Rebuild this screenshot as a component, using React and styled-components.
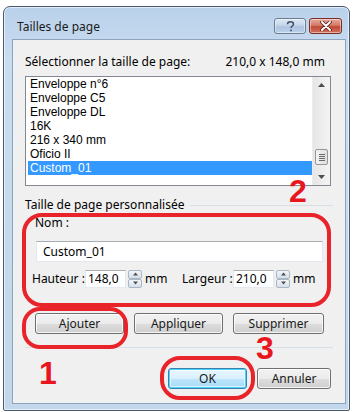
import React from "react";
import styled, { createGlobalStyle } from "styled-components";

const GlobalStyle = createGlobalStyle`
  html, body {
    margin: 0;
    padding: 0;
    background: #ffffff;
  }
  body {
    font-family: "Noto Sans", "Open Sans", sans-serif;
    font-size: 12px;
    color: #000;
  }
`;

const Window = styled.div`
  margin: 6px 0 0 3px;
  width: 345px;
  height: 403px;
  border: 1px solid #4a5a6e;
  border-radius: 7px 7px 2px 2px;
  background: linear-gradient(180deg, #b9d1ea 0%, #c9dcf1 12%, #c2d6ec 100%);
  box-shadow: inset 0 0 0 1px rgba(255, 255, 255, 0.6);
  display: flex;
  flex-direction: column;
`;

const TitleBar = styled.div`
  height: 32px;
  display: flex;
  align-items: flex-start;
  padding: 0 7px 0 13px;
`;

const Title = styled.div`
  font-size: 12px;
  line-height: 16px;
  margin-top: 12px;
  flex: 1;
  color: #1a1a1a;
`;

const CaptionButton = styled.div`
  margin-top: 11px;
  box-sizing: border-box;
  width: ${(p) => p.$w}px;
  height: 16px;
  border: 1px solid ${(p) => (p.$close ? "#7a2d25" : "#6b7d93")};
  border-radius: 3px;
  margin-left: ${(p) => (p.$close ? 3 : 0)}px;
  background: ${(p) =>
    p.$close
      ? "linear-gradient(180deg, #e9a99c 0%, #d47a68 45%, #c14a36 55%, #d2735f 100%)"
      : "linear-gradient(180deg, #dfe9f5 0%, #c4d5ea 45%, #aec4df 55%, #bdd2ea 100%)"};
  display: flex;
  align-items: center;
  justify-content: center;
  box-shadow: inset 0 0 0 1px rgba(255, 255, 255, 0.45);
`;

const Client = styled.div`
  flex: 1;
  margin: 0 3px 6px 8px;
  background: #f0f0f0;
  border: 1px solid #8fa4bd;
  padding: 14px 14px 0 12px;
  position: relative;
`;

const HeadRow = styled.div`
  display: flex;
  justify-content: space-between;
  line-height: 16px;
  padding: 0 6px 0 0;
  margin-bottom: 6px;
`;

const ListBox = styled.div`
  height: 108px;
  border: 1px solid #828790;
  background: #fff;
  display: flex;
  overflow: hidden;
`;

const Items = styled.div`
  flex: 1;
  padding-left: 2px;
  font-family: "Liberation Sans", Arial, sans-serif;
  font-size: 12px;
`;

const Item = styled.div`
  height: 14px;
  line-height: 14px;
  padding-left: 2px;
  background: ${(p) => (p.$selected ? "#3399ff" : "transparent")};
  color: ${(p) => (p.$selected ? "#fff" : "#000")};
`;

const ScrollBar = styled.div`
  width: 17px;
  background: linear-gradient(90deg, #e6e6e6, #f4f4f4);
  border-left: 1px solid #ececec;
  display: flex;
  flex-direction: column;
  align-items: center;
`;

const Arrow = styled.div`
  height: 16px;
  display: flex;
  align-items: center;
  justify-content: center;
`;

const Track = styled.div`
  flex: 1;
  width: 100%;
  display: flex;
  flex-direction: column;
  justify-content: flex-end;
  align-items: center;
  padding-bottom: 4px;
`;

const Thumb = styled.div`
  width: 13px;
  height: 16px;
  border: 1px solid #979797;
  border-radius: 2px;
  background: linear-gradient(90deg, #f3f3f3, #dedede);
  display: flex;
  flex-direction: column;
  align-items: center;
  justify-content: center;
  gap: 1px;
  box-sizing: border-box;
`;

const Grip = styled.div`
  width: 6px;
  height: 1px;
  background: #6a6a6a;
`;

const GroupHeader = styled.div`
  display: flex;
  align-items: center;
  gap: 6px;
  margin-top: 11px;
  line-height: 16px;
  &::after {
    content: "";
    flex: 1;
    height: 1px;
    background: #d5dfe5;
    margin-right: -2px;
  }
`;

const GroupBody = styled.div`
  position: relative;
  margin-left: -3px;
  width: 309px;
  height: 94px;
  box-sizing: border-box;
  padding: 2px 8px 0 13px;
  display: flex;
  flex-direction: column;
`;

const Highlight = styled.div`
  position: absolute;
  inset: ${(p) => p.$inset || "0"};
  border: 4px solid #e8232a;
  border-radius: ${(p) => p.$r || 20}px;
  pointer-events: none;
`;

const FieldLabel = styled.div`
  line-height: 16px;
`;

const TextField = styled.div`
  margin: 10px 0 0 1px;
  height: 21px;
  width: 287px;
  box-sizing: border-box;
  background: #fff;
  border: 1px solid #e3e9ef;
  border-top-color: #abadb3;
  line-height: 19px;
  padding-left: 6px;
`;

const SizeRow = styled.div`
  margin-top: 8px;
  margin-left: -3px;
  display: flex;
  align-items: center;
  height: 17px;
`;

const RowLabel = styled.span`
  width: ${(p) => p.$w}px;
  margin-left: ${(p) => p.$ml || 0}px;
  white-space: nowrap;
`;

const NumField = styled.div`
  width: 41px;
  height: 18px;
  box-sizing: border-box;
  background: #fff;
  border: 1px solid #e3e9ef;
  border-top-color: #abadb3;
  line-height: 16px;
  padding-left: 2px;
`;

const Spin = styled.div`
  margin-left: 2px;
  width: 14px;
  height: 18px;
  display: flex;
  flex-direction: column;
`;

const SpinHalf = styled.div`
  flex: 1;
  border: 1px solid #a9b6c6;
  border-radius: 2px;
  background: linear-gradient(180deg, #f2f5f9, #d6dfea);
  display: flex;
  align-items: center;
  justify-content: center;
`;

const Unit = styled.span`
  margin-left: 3px;
  width: 20px;
`;

const ButtonRow = styled.div`
  display: flex;
  gap: 10px;
  margin: 6px 0 0 10px;
`;

const Wrap = styled.div`
  position: relative;
  display: flex;
`;

const Button = styled.div`
  width: ${(p) => p.$w}px;
  height: 21px;
  box-sizing: border-box;
  border: 1px solid ${(p) => (p.$default ? "#3c7fb1" : "#707070")};
  border-radius: 3px;
  background: ${(p) =>
    p.$default
      ? "linear-gradient(180deg, #eaf6fd 0%, #d9f0fc 50%, #bee6fd 51%, #a7d9f5 100%)"
      : "linear-gradient(180deg, #f2f2f2 0%, #ebebeb 50%, #dddddd 51%, #cfcfcf 100%)"};
  box-shadow: ${(p) =>
    p.$default
      ? "inset 0 0 0 1px #48d3fb, inset 0 0 0 2px rgba(255,255,255,0.6)"
      : "inset 0 0 0 1px rgba(255,255,255,0.75)"};
  display: flex;
  align-items: center;
  justify-content: center;
  line-height: 16px;
  color: #1a1a1a;
`;

const Separator = styled.div`
  margin-top: 13px;
  height: 1px;
  width: 308px;
  background: #d5dfe5;
`;

const FooterRow = styled.div`
  display: flex;
  justify-content: flex-end;
  gap: 10px;
  margin-top: 20px;
`;

const Digit = styled.div`
  position: absolute;
  left: ${(p) => p.$x}px;
  top: ${(p) => p.$y}px;
  font-family: "Liberation Sans", Arial, sans-serif;
  font-weight: bold;
  font-size: 32px;
  line-height: 1;
  color: #e8161e;
  pointer-events: none;
`;

const Tri = ({ up, size = 7 }) => (
  <svg width={size} height={4} viewBox="0 0 7 4">
    <path d={up ? "M0 4 L3.5 0 L7 4 Z" : "M0 0 L3.5 4 L7 0 Z"} fill="#4d4d4d" />
  </svg>
);

const SpinBox = () => (
  <Spin>
    <SpinHalf>
      <Tri up size={5} />
    </SpinHalf>
    <SpinHalf>
      <Tri size={5} />
    </SpinHalf>
  </Spin>
);

const sizes = [
  "Enveloppe n°6",
  "Enveloppe C5",
  "Enveloppe DL",
  "16K",
  "216 x 340 mm",
  "Oficio II",
  "Custom_01",
];

export default function App() {
  return (
    <>
      <GlobalStyle />
      <Window>
        <TitleBar>
          <Title>Tailles de page</Title>
          <CaptionButton $w={32}>
            <svg width="9" height="11" viewBox="0 0 9 11">
              <path
                d="M1.5 3.2 C1.5 1.5 3 0.8 4.5 0.8 C6.2 0.8 7.5 1.8 7.5 3.2 C7.5 4.8 5 5.2 5 7"
                fill="none"
                stroke="#3d4d63"
                strokeWidth="1.4"
              />
              <rect x="4.2" y="8.6" width="1.6" height="1.6" fill="#3d4d63" />
            </svg>
          </CaptionButton>
          <CaptionButton $w={33} $close>
            <svg width="12" height="10" viewBox="0 0 12 10">
              <path
                d="M2 1 L10 9 M10 1 L2 9"
                stroke="#5a1f18"
                strokeWidth="3.6"
                strokeLinecap="round"
              />
              <path
                d="M2 1 L10 9 M10 1 L2 9"
                stroke="#fff"
                strokeWidth="2"
                strokeLinecap="round"
              />
            </svg>
          </CaptionButton>
        </TitleBar>
        <Client>
          <HeadRow>
            <span>Sélectionner la taille de page:</span>
            <span>210,0 x 148,0 mm</span>
          </HeadRow>
          <ListBox>
            <Items>
              {sizes.map((s) => (
                <Item key={s} $selected={s === "Custom_01"}>
                  {s}
                </Item>
              ))}
            </Items>
            <ScrollBar>
              <Arrow>
                <Tri up />
              </Arrow>
              <Track>
                <Thumb>
                  <Grip />
                  <Grip />
                  <Grip />
                  <Grip />
                </Thumb>
              </Track>
              <Arrow>
                <Tri />
              </Arrow>
            </ScrollBar>
          </ListBox>
          <GroupHeader>Taille de page personnalisée</GroupHeader>
          <GroupBody>
            <FieldLabel>Nom :</FieldLabel>
            <TextField>Custom_01</TextField>
            <SizeRow>
              <RowLabel $w={53}>Hauteur :</RowLabel>
              <NumField>148,0</NumField>
              <SpinBox />
              <Unit>mm</Unit>
              <RowLabel $w={51} $ml={17}>
                Largeur :
              </RowLabel>
              <NumField>210,0</NumField>
              <SpinBox />
              <Unit>mm</Unit>
            </SizeRow>
            <Highlight />
          </GroupBody>
          <ButtonRow>
            <Wrap>
              <Button $w={89}>Ajouter</Button>
              <Highlight $inset="-6px -4px -15px -13px" $r={18} />
            </Wrap>
            <Button $w={89}>Appliquer</Button>
            <Button $w={91}>Supprimer</Button>
          </ButtonRow>
          <Separator />
          <FooterRow>
            <Wrap>
              <Button $w={79} $default>
                OK
              </Button>
              <Highlight $inset="-12px -8px -11px -8px" $r={20} />
            </Wrap>
            <Button $w={74}>Annuler</Button>
          </FooterRow>
          <Digit $x={276} $y={135}>2</Digit>
          <Digit $x={26} $y={317}>1</Digit>
          <Digit $x={243} $y={292}>3</Digit>
        </Client>
      </Window>
    </>
  );
}
